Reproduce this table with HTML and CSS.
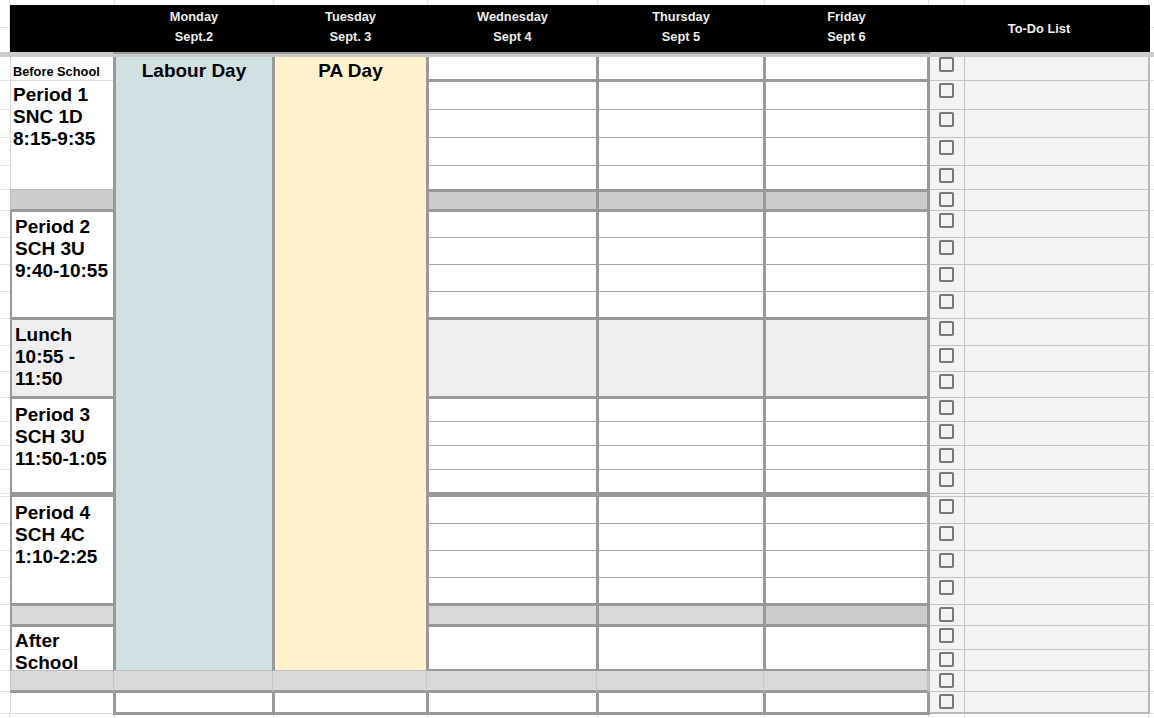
FILE: index.html
```html
<!DOCTYPE html>
<html lang="en">
<head>
<meta charset="utf-8">
<title>Weekly Planner</title>
<link rel="stylesheet" href="styles.css">
</head>
<body>
<div class="sheet">
  <div class="gridrow"><span></span><span></span><span></span><span></span><span></span><span></span><span></span><span></span><span></span><span></span></div>

  <div class="header">
    <div class="hd-side"><span></span><span></span></div>
    <div class="hd-black">
      <div class="hd-lab"></div>
      <div class="hd-day w-mon"><span>Monday</span><span>Sept.2</span></div>
      <div class="hd-day w-tue"><span>Tuesday</span><span>Sept. 3</span></div>
      <div class="hd-day w-wed"><span>Wednesday</span><span>Sept 4</span></div>
      <div class="hd-day w-thu"><span>Thursday</span><span>Sept 5</span></div>
      <div class="hd-day w-fri"><span>Friday</span><span>Sept 6</span></div>
      <div class="hd-todo">To-Do List</div>
    </div>
    <div class="hd-side hd-right"><span></span><span></span></div>
  </div>

  <div class="freeze"><div class="freeze-days"></div></div>

  <div class="body">
    <div class="mid">
      <div class="col lab">
        <div class="lc bs h24">Before School</div>
        <div class="lc p1 h109">Period 1<br>SNC 1D<br>8:15-9:35</div>
        <div class="lc brk h22"></div>
        <div class="lc blk h108">Period 2<br>SCH 3U<br>9:40-10:55</div>
        <div class="lc blk lunch h79">Lunch<br>10:55 -<br>11:50</div>
        <div class="lc blk dbl h98">Period 3<br>SCH 3U<br>11:50-1:05</div>
        <div class="lc blk p4 h109">Period 4<br>SCH 4C<br>1:10-2:25</div>
        <div class="lc blk brk2 h21"></div>
        <div class="lc blk after h44">After<br>School</div>
        <div class="lc gray h22"></div>
        <div class="lc last h21"></div>
      </div>

      <div class="col w-mon">
        <div class="big h614">Labour Day</div>
        <div class="gr h22"></div>
        <div class="d end h22"></div>
      </div>

      <div class="col w-tue">
        <div class="big pa h614">PA Day</div>
        <div class="gr h22"></div>
        <div class="d end h22"></div>
      </div>

      <div class="col w-wed">
        <div class="d end h25"></div>
        <div class="d h28"></div>
        <div class="d h28"></div>
        <div class="d h28"></div>
        <div class="d end h26"></div>
        <div class="d end brk h20"></div>
        <div class="d h26"></div>
        <div class="d h27"></div>
        <div class="d h27"></div>
        <div class="d end h28"></div>
        <div class="d end lunch h79"></div>
        <div class="d h23"></div>
        <div class="d h24"></div>
        <div class="d h24"></div>
        <div class="d dbl h27"></div>
        <div class="d h27"></div>
        <div class="d h27"></div>
        <div class="d h27"></div>
        <div class="d end h28"></div>
        <div class="d end brk2 h21"></div>
        <div class="d med h44"></div>
        <div class="gr h22"></div>
        <div class="d end h22"></div>
      </div>

      <div class="col w-thu">
        <div class="d end h25"></div>
        <div class="d h28"></div>
        <div class="d h28"></div>
        <div class="d h28"></div>
        <div class="d end h26"></div>
        <div class="d end brk h20"></div>
        <div class="d h26"></div>
        <div class="d h27"></div>
        <div class="d h27"></div>
        <div class="d end h28"></div>
        <div class="d end lunch h79"></div>
        <div class="d h23"></div>
        <div class="d h24"></div>
        <div class="d h24"></div>
        <div class="d dbl h27"></div>
        <div class="d h27"></div>
        <div class="d h27"></div>
        <div class="d h27"></div>
        <div class="d end h28"></div>
        <div class="d end brk2 h21"></div>
        <div class="d med h44"></div>
        <div class="gr h22"></div>
        <div class="d end h22"></div>
      </div>

      <div class="col w-fri fri">
        <div class="d end h25"></div>
        <div class="d h28"></div>
        <div class="d h28"></div>
        <div class="d h28"></div>
        <div class="d end h26"></div>
        <div class="d end brk h20"></div>
        <div class="d h26"></div>
        <div class="d h27"></div>
        <div class="d h27"></div>
        <div class="d end h28"></div>
        <div class="d end lunch h79"></div>
        <div class="d h23"></div>
        <div class="d h24"></div>
        <div class="d h24"></div>
        <div class="d dbl h27"></div>
        <div class="d h27"></div>
        <div class="d h27"></div>
        <div class="d h27"></div>
        <div class="d end h28"></div>
        <div class="d end brk2 h21"></div>
        <div class="d med h44"></div>
        <div class="gr h22"></div>
        <div class="d end h22"></div>
      </div>
    </div>

    <div class="r"><span class="ca"></span><span class="ck first"><span class="box"></span></span><span class="tx"></span><span class="cr"></span></div>
    <div class="r"><span class="ca"></span><span class="ck"><span class="box"></span></span><span class="tx"></span><span class="cr"></span></div>
    <div class="r"><span class="ca"></span><span class="ck"><span class="box"></span></span><span class="tx"></span><span class="cr"></span></div>
    <div class="r"><span class="ca"></span><span class="ck"><span class="box"></span></span><span class="tx"></span><span class="cr"></span></div>
    <div class="r"><span class="ca"></span><span class="ck"><span class="box"></span></span><span class="tx"></span><span class="cr"></span></div>
    <div class="r"><span class="ca"></span><span class="ck"><span class="box"></span></span><span class="tx"></span><span class="cr"></span></div>
    <div class="r"><span class="ca"></span><span class="ck"><span class="box"></span></span><span class="tx"></span><span class="cr"></span></div>
    <div class="r"><span class="ca"></span><span class="ck"><span class="box"></span></span><span class="tx"></span><span class="cr"></span></div>
    <div class="r"><span class="ca"></span><span class="ck"><span class="box"></span></span><span class="tx"></span><span class="cr"></span></div>
    <div class="r"><span class="ca"></span><span class="ck"><span class="box"></span></span><span class="tx"></span><span class="cr"></span></div>
    <div class="r"><span class="ca"></span><span class="ck"><span class="box"></span></span><span class="tx"></span><span class="cr"></span></div>
    <div class="r"><span class="ca"></span><span class="ck"><span class="box"></span></span><span class="tx"></span><span class="cr"></span></div>
    <div class="r"><span class="ca"></span><span class="ck"><span class="box"></span></span><span class="tx"></span><span class="cr"></span></div>
    <div class="r"><span class="ca"></span><span class="ck"><span class="box"></span></span><span class="tx"></span><span class="cr"></span></div>
    <div class="r"><span class="ca"></span><span class="ck"><span class="box"></span></span><span class="tx"></span><span class="cr"></span></div>
    <div class="r"><span class="ca"></span><span class="ck"><span class="box"></span></span><span class="tx"></span><span class="cr"></span></div>
    <div class="r"><span class="ca"></span><span class="ck"><span class="box"></span></span><span class="tx"></span><span class="cr"></span></div>
    <div class="r"><span class="ca"></span><span class="ck"></span><span class="tx"></span><span class="cr"></span></div>
    <div class="r"><span class="ca"></span><span class="ck"><span class="box"></span></span><span class="tx"></span><span class="cr"></span></div>
    <div class="r"><span class="ca"></span><span class="ck"><span class="box"></span></span><span class="tx"></span><span class="cr"></span></div>
    <div class="r"><span class="ca"></span><span class="ck"><span class="box"></span></span><span class="tx"></span><span class="cr"></span></div>
    <div class="r"><span class="ca"></span><span class="ck"><span class="box"></span></span><span class="tx"></span><span class="cr"></span></div>
    <div class="r"><span class="ca"></span><span class="ck"><span class="box"></span></span><span class="tx"></span><span class="cr"></span></div>
    <div class="r"><span class="ca"></span><span class="ck"><span class="box"></span></span><span class="tx"></span><span class="cr"></span></div>
    <div class="r"><span class="ca"></span><span class="ck"><span class="box"></span></span><span class="tx"></span><span class="cr"></span></div>
    <div class="r"><span class="ca"></span><span class="ck"><span class="box"></span></span><span class="tx"></span><span class="cr"></span></div>
    <div class="r last"><span class="ca"></span><span class="ck"><span class="box"></span></span><span class="tx"></span><span class="cr"></span></div>
  </div>

  <div class="gridrow tail"><span></span><span></span><span></span><span></span><span></span><span></span><span></span><span></span><span></span><span></span></div>
</div>
</body>
</html>
```

FILE: styles.css
```css
* { box-sizing: border-box; }

html, body {
  margin: 0;
  padding: 0;
  background: #ffffff;
}

body {
  font-family: "Liberation Sans", Arial, sans-serif;
  color: #000;
  overflow: hidden;
}

.sheet {
  width: 1154px;
  height: 718px;
  overflow: hidden;
}

/* faint spreadsheet gridlines above and below the sheet */
.gridrow {
  display: flex;
  height: 5px;
}
.gridrow.tail { height: 4px; }
.gridrow > span {
  flex: none;
  border-right: 1px solid #e2e2e2;
}
.gridrow > span:nth-child(1) { width: 10px; }
.gridrow > span:nth-child(2) { width: 105px; }
.gridrow > span:nth-child(3) { width: 159px; }
.gridrow > span:nth-child(4) { width: 154px; }
.gridrow > span:nth-child(5) { width: 170px; }
.gridrow > span:nth-child(6) { width: 167px; }
.gridrow > span:nth-child(7) { width: 164px; }
.gridrow > span:nth-child(8) { width: 36px; }
.gridrow > span:nth-child(9) { width: 184px; }
.gridrow > span:nth-child(10) { width: 5px; border-right: 0; }

/* header */
.header {
  display: flex;
  height: 47px;
}
.hd-side {
  width: 10px;
  display: flex;
  flex-direction: column;
  border-right: 1px solid #e2e2e2;
}
.hd-side > span:first-child {
  height: 23px;
  border-bottom: 1px solid #e2e2e2;
}
.hd-right {
  width: 4px;
  border-right: 0;
}
.hd-black {
  width: 1140px;
  background: #000;
  display: flex;
  color: #eeeeee;
  font-weight: bold;
  font-size: 12.8px;
}
.hd-lab { width: 103px; }
.hd-day {
  display: flex;
  flex-direction: column;
  align-items: center;
  padding-top: 2px;
  padding-left: 3px;
  line-height: 20px;
}
.hd-day.w-fri { padding-right: 3px; }
.hd-todo {
  width: 220px;
  padding-top: 14px;
  padding-right: 2px;
  line-height: 20px;
  text-align: center;
}

.w-mon { width: 159px; }
.w-tue { width: 154px; }
.w-wed { width: 170px; }
.w-thu { width: 167px; }
.w-fri { width: 167px; }

/* frozen-row divider */
.freeze {
  height: 5px;
  background: #cbcbcb;
}
.freeze-days {
  margin-left: 113px;
  width: 817px;
  height: 2px;
  background: #9a9a9a;
}

/* sheet body */
.body {
  display: grid;
  grid-template-columns: 10px 920px 35px 185px 4px;
  grid-template-rows: 24px 29px 28px 28px 24px 21px 27px 27px 27px 27px 27px 26px 26px 24px 24px 24px 24px 3px 27px 27px 27px 27px 21px 24px 21px 21px 22px;
}
.mid {
  grid-column: 2;
  grid-row: 1 / -1;
  display: flex;
  align-self: start;
  position: relative;
  z-index: 1;
}
.col {
  display: flex;
  flex-direction: column;
  flex: none;
}

.h20 { height: 20px; }
.h21 { height: 21px; }
.h22 { height: 22px; }
.h23 { height: 23px; }
.h24 { height: 24px; }
.h25 { height: 25px; }
.h26 { height: 26px; }
.h27 { height: 27px; }
.h28 { height: 28px; }
.h44 { height: 44px; }
.h79 { height: 79px; }
.h98 { height: 98px; }
.h108 { height: 108px; }
.h109 { height: 109px; }
.h614 { height: 614px; }

/* label column */
.lab { width: 103px; }
.lc {
  flex: none;
  font-weight: bold;
  font-size: 19px;
  line-height: normal;
  overflow: hidden;
}
.lc.bs {
  font-size: 12.8px;
  padding: 7px 0 0 2px;
  border-left: 1px solid #d6d6d6;
  border-bottom: 1px solid #dadada;
}
.lc.p1 {
  padding: 3px 0 0 2px;
  border-left: 1px solid #d6d6d6;
  border-bottom: 1px solid #bdbdbd;
}
.lc.brk {
  background: #cccccc;
  border-left: 1px solid #c0c0c0;
  border-bottom: 3px solid #999;
}
.lc.blk {
  padding: 4px 0 0 3px;
  border-left: 2px solid #999;
  border-bottom: 3px solid #999;
}
.lc.lunch { background: #efefef; }
.lc.dbl { border-bottom-width: 5px; padding-top: 5px; }
.lc.p4 { padding-top: 5px; }
.lc.brk2 { background: #d9d9d9; }
.lc.after {
  padding-top: 3px;
  border-bottom: 1px solid #bdbdbd;
}
.lc.gray {
  background: #d9d9d9;
  border-left: 1px solid #c6c6c6;
  border-bottom: 3px solid #999;
}
.lc.last {
  border-left: 1px solid #dcdcdc;
  border-bottom: 1px solid #dcdcdc;
}

/* day columns */
.big {
  flex: none;
  border-left: 3px solid #999;
  border-bottom: 1px solid #bdbdbd;
  background: #d0e0e3;
  text-align: center;
  font-weight: bold;
  font-size: 19px;
  padding-top: 3px;
}
.big.pa { background: #fff2cc; }

.d {
  flex: none;
  background: #fff;
  border-left: 3px solid #999;
  border-bottom: 1px solid #a6a6a6;
}
.d.end { border-bottom: 3px solid #999; }
.d.med { border-bottom: 2px solid #999; }
.d.dbl { border-bottom: 5px solid #999; }
.d.brk { background: #cccccc; }
.d.brk2 { background: #d9d9d9; }
.fri .d.brk2 { background: #cccccc; }
.d.lunch { background: #efefef; }
.fri .d { border-right: 3px solid #999; }

.gr {
  flex: none;
  background: #d9d9d9;
  border-left: 1px solid #c6c6c6;
  border-bottom: 3px solid #999;
}
.fri .gr { border-right: 3px solid #c2c2c2; }

/* to-do list and outer gridline cells */
.r { display: contents; }
.ca {
  border-bottom: 1px solid #e2e2e2;
}
.cr {
  border-bottom: 1px solid #e2e2e2;
}
.ck {
  background: #f3f3f3;
  border-bottom: 1px solid #c3c3c3;
  border-right: 1px solid #c3c3c3;
  padding: 2px 0 0 9px;
  overflow: hidden;
}
.ck.first { padding-top: 0; }
.tx {
  background: #f3f3f3;
  border-bottom: 1px solid #c3c3c3;
  border-right: 2px solid #b7b7b7;
}
.r.last .ck,
.r.last .tx { border-bottom: 2px solid #b9b9b9; }

.box {
  display: block;
  width: 15px;
  height: 15px;
  border: 2px solid #777;
  border-radius: 2px;
}
```
